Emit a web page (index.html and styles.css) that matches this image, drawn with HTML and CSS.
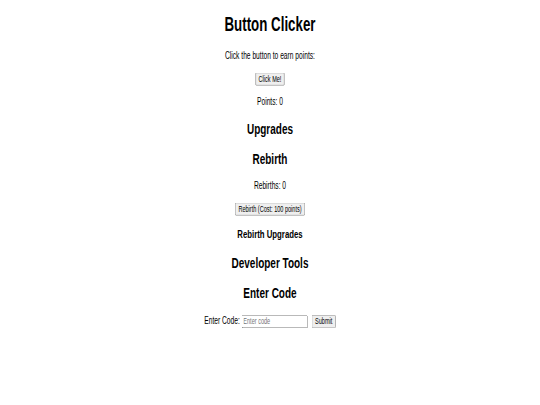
FILE: index.html
```html
<!DOCTYPE html>
<html lang="en">
<head>
<meta charset="utf-8">
<title>Button Clicker</title>
<link rel="stylesheet" href="styles.css">
</head>
<body>
<div class="page">
  <h1>Button Clicker</h1>
  <p>Click the button to earn points:</p>
  <button class="btn">Click Me!</button>
  <p>Points: 0</p>
  <h2>Upgrades</h2>
  <div class="upgrades"></div>
  <h2>Rebirth</h2>
  <p>Rebirths: 0</p>
  <button class="btn">Rebirth (Cost: 100 points)</button>
  <h3>Rebirth Upgrades</h3>
  <div class="rebirth-upgrades"></div>
  <h2>Developer Tools</h2>
  <div class="dev-tools"></div>
  <h2>Enter Code</h2>
  <div class="code-row"><label class="code-label" for="code">Enter Code:</label> <input class="code-input" id="code" type="text" placeholder="Enter code"> <button class="btn submit">Submit</button></div>
</div>
</body>
</html>
```

FILE: styles.css
```css
html, body {
  margin: 0;
  padding: 0;
  overflow: hidden;
  background: #ffffff;
}

.page {
  display: flow-root;
  width: 1298px;
  box-sizing: border-box;
  padding: 0 8px;
  text-align: center;
  font-family: "Liberation Sans", Arial, sans-serif;
  color: #000000;
  transform: scale(0.416, 0.625);
  transform-origin: 0 0;
}

.page h1 {
  font-size: 32px;
  margin: 21.44px 0;
}

.page h2 {
  font-size: 24px;
  margin: 19.92px 0;
}

.page h3 {
  font-size: 18.72px;
  margin: 18.72px 0;
}

.page p {
  font-size: 16px;
  margin: 16px 0;
}

.btn {
  font-family: "Liberation Sans", Arial, sans-serif;
  font-size: 13.333px;
  margin: 2px 0 1px;
}

.code-input {
  box-sizing: border-box;
  width: 159px;
  font-family: "Liberation Sans", Arial, sans-serif;
  font-size: 13.333px;
}

.submit {
  margin-left: 5px;
}
```
